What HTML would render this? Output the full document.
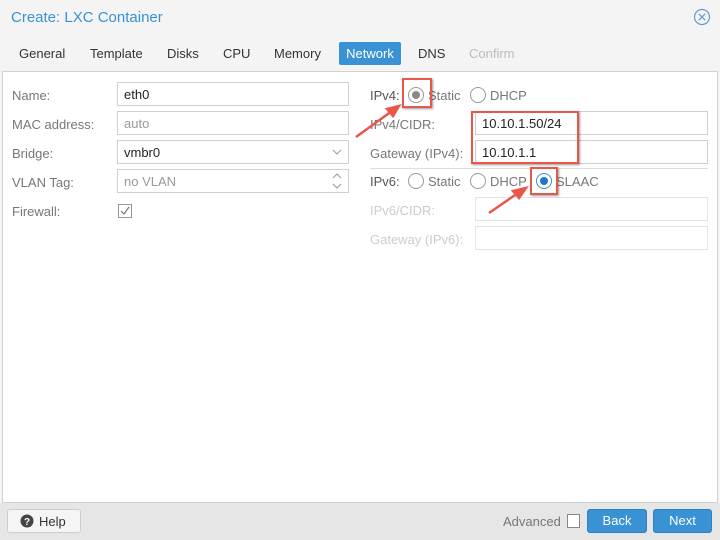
<!DOCTYPE html>
<html><head><style>
*{box-sizing:border-box;margin:0;padding:0}
body{width:720px;height:540px;background:#f4f4f4;font-family:"Liberation Sans",sans-serif;font-size:13px;color:#333;position:relative;overflow:hidden}
.a{position:absolute}
.lbl{color:#777;font-size:13px}
.in{position:absolute;background:#fff;border:1px solid #cfcfcf;height:24px;padding:4px 6px;font-size:13px;color:#222}
.dis{color:#999}
.radio{position:absolute;width:16px;height:16px;border:1px solid #999;border-radius:50%;background:#fff}
.red{position:absolute;border:2px solid #e8574a;box-shadow:1px 1px 2px rgba(0,0,0,.4)}
.btn{position:absolute;top:509px;height:24px;border-radius:3px;background:#3892d4;color:#fff;border:1px solid #2f80c0;text-align:center;line-height:22px}
</style></head><body>
<div class="a" style="left:11px;top:9px;font-size:15px;color:#3892d4">Create: LXC Container</div>
<svg class="a" style="left:693px;top:8px" width="18" height="18" viewBox="0 0 18 18"><circle cx="9" cy="9" r="7.5" fill="none" stroke="#5d9bd4" stroke-width="1.2"/><path d="M5.8 5.8L12.2 12.2M12.2 5.8L5.8 12.2" stroke="#5d9bd4" stroke-width="1.2"/></svg>
<div class="a" style="top:46px;left:19px">General</div>
<div class="a" style="top:46px;left:90px">Template</div>
<div class="a" style="top:46px;left:167px">Disks</div>
<div class="a" style="top:46px;left:223px">CPU</div>
<div class="a" style="top:46px;left:274px">Memory</div>
<div class="a" style="top:42px;left:339px;width:62px;height:23px;background:#3892d4;color:#fff;border-radius:2px;text-align:center;line-height:23px">Network</div>
<div class="a" style="top:46px;left:418px">DNS</div>
<div class="a" style="top:46px;left:469px;color:#bbb">Confirm</div>
<div class="a" style="left:2px;top:71px;width:716px;height:432px;background:#fff;border:1px solid #d0d0d0"></div>

<div class="a lbl" style="left:12px;top:88px">Name:</div>
<div class="in" style="left:117px;top:82px;width:232px">eth0</div>
<div class="a lbl" style="left:12px;top:117px">MAC address:</div>
<div class="in dis" style="left:117px;top:111px;width:232px">auto</div>
<div class="a lbl" style="left:12px;top:146px">Bridge:</div>
<div class="in" style="left:117px;top:140px;width:232px">vmbr0</div>
<svg class="a" style="left:332px;top:148px" width="10" height="8"><path d="M1 2L5 6L9 2" fill="none" stroke="#999"/></svg>
<div class="a lbl" style="left:12px;top:175px">VLAN Tag:</div>
<div class="in dis" style="left:117px;top:169px;width:232px">no VLAN</div>
<svg class="a" style="left:332px;top:172px" width="10" height="18"><path d="M1 6L5 2L9 6M1 12L5 16L9 12" fill="none" stroke="#999"/></svg>
<div class="a lbl" style="left:12px;top:204px">Firewall:</div>
<svg class="a" style="left:118px;top:204px" width="14" height="14"><rect x=".5" y=".5" width="13" height="13" fill="#fff" stroke="#999"/><path d="M3 7L6 10L11 3" fill="none" stroke="#777" stroke-width="1.2"/></svg>

<div class="a lbl" style="left:370px;top:88px;color:#555">IPv4:</div>
<div class="radio" style="left:408px;top:87px"><div class="a" style="left:3px;top:3px;width:8px;height:8px;border-radius:50%;background:#888"></div></div>
<div class="a lbl" style="left:428px;top:88px">Static</div>
<div class="radio" style="left:470px;top:87px"></div>
<div class="a lbl" style="left:490px;top:88px">DHCP</div>
<div class="a lbl" style="left:370px;top:117px">IPv4/CIDR:</div>
<div class="in" style="left:475px;top:111px;width:233px">10.10.1.50/24</div>
<div class="a lbl" style="left:370px;top:146px">Gateway (IPv4):</div>
<div class="in" style="left:475px;top:140px;width:233px">10.10.1.1</div>
<div class="a" style="left:370px;top:168px;width:338px;height:1px;background:#ddd"></div>
<div class="a lbl" style="left:370px;top:174px;color:#555">IPv6:</div>
<div class="radio" style="left:408px;top:173px"></div>
<div class="a lbl" style="left:428px;top:174px">Static</div>
<div class="radio" style="left:470px;top:173px"></div>
<div class="a lbl" style="left:490px;top:174px">DHCP</div>
<div class="radio" style="left:536px;top:173px;border-color:#3892d4"><div class="a" style="left:3px;top:3px;width:8px;height:8px;border-radius:50%;background:#1e78c8"></div></div>
<div class="a lbl" style="left:556px;top:174px">SLAAC</div>
<div class="a lbl" style="left:370px;top:203px;color:#ccc">IPv6/CIDR:</div>
<div class="in" style="left:475px;top:197px;width:233px;border-color:#e3e3e3"></div>
<div class="a lbl" style="left:370px;top:232px;color:#ccc">Gateway (IPv6):</div>
<div class="in" style="left:475px;top:226px;width:233px;border-color:#e3e3e3"></div>

<div class="red" style="left:402px;top:78px;width:30px;height:30px"></div>
<div class="red" style="left:471px;top:111px;width:108px;height:53px"></div>
<div class="red" style="left:530px;top:167px;width:28px;height:28px"></div>
<svg class="a" style="left:0;top:0" width="720" height="540"><g stroke="#e8574a" stroke-width="2.5" fill="#e8574a"><path d="M356 137L392 111"/><path d="M399 106L387 109L393 116Z"/><path d="M489 213L518 193"/><path d="M526 188L513 191L519 198Z"/></g></svg>

<div class="a" style="left:0;top:503px;width:720px;height:37px;background:#e6e6e6"></div>
<div class="a" style="left:7px;top:509px;width:74px;height:24px;background:#f5f5f5;border:1px solid #ccc;border-radius:3px"></div>
<svg class="a" style="left:20px;top:514px" width="14" height="14"><circle cx="7" cy="7" r="6.5" fill="#444"/><text x="7" y="11" font-size="10" font-weight="bold" fill="#fff" text-anchor="middle" font-family="Liberation Sans">?</text></svg>
<div class="a" style="left:39px;top:514px;color:#333">Help</div>
<div class="a" style="left:503px;top:514px;color:#777">Advanced</div>
<div class="a" style="left:567px;top:514px;width:13px;height:14px;border:1px solid #888;background:#fff"></div>
<div class="btn" style="left:587px;width:60px">Back</div>
<div class="btn" style="left:653px;width:59px">Next</div>
</body></html>
